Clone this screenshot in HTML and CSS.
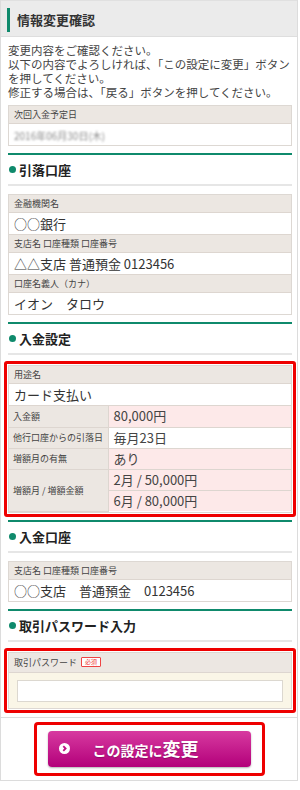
FILE: index.html
```html
<!DOCTYPE html>
<html>
<head>
  <meta charset="UTF-8">
  <link rel="stylesheet" href="styles.css">
</head>
<body>
  <div class="page">
    <div class="page-header">
      <h1 class="page-title">情報変更確認</h1>
    </div>

    <div class="content">
      <p class="lead">変更内容をご確認ください。<br>以下の内容でよろしければ、「この設定に変更」ボタンを押してください。<br>修正する場合は、「戻る」ボタンを押してください。</p>

      <div class="info-box">
        <div class="info-label">次回入金予定日</div>
        <div class="info-value"><span class="masked">2016年06月30日(木)</span></div>
      </div>

      <h2 class="section-title">引落口座</h2>
      <div class="info-box">
        <div class="info-label">金融機関名</div>
        <div class="info-value">○○銀行</div>
        <div class="info-label">支店名 口座種類 口座番号</div>
        <div class="info-value">△△支店 普通預金 0123456</div>
        <div class="info-label">口座名義人（カナ）</div>
        <div class="info-value">イオン　タロウ</div>
      </div>

      <h2 class="section-title">入金設定</h2>
      <div class="highlight">
        <div class="info-box">
          <div class="info-label">用途名</div>
          <div class="info-value">カード支払い</div>
          <table class="info-table">
            <tr><th>入金額</th><td>80,000円</td></tr>
            <tr><th>他行口座からの引落日</th><td class="plain">毎月23日</td></tr>
            <tr><th>増額月の有無</th><td>あり</td></tr>
            <tr><th rowspan="2">増額月 / 増額金額</th><td>2月 / 50,000円</td></tr>
            <tr><td>6月 / 80,000円</td></tr>
          </table>
        </div>
      </div>

      <h2 class="section-title">入金口座</h2>
      <div class="info-box">
        <div class="info-label">支店名 口座種類 口座番号</div>
        <div class="info-value">○○支店　普通預金　0123456</div>
      </div>

      <h2 class="section-title">取引パスワード入力</h2>
      <div class="highlight">
        <div class="info-box">
          <div class="info-label password-label">取引パスワード<span class="badge">必須</span></div>
          <div class="input-area">
            <input type="password" class="text-input">
          </div>
        </div>
      </div>
    </div>

    <div class="action-area">
      <div class="action-frame">
        <button class="button-submit">
          <svg class="button-icon" width="11" height="11" viewBox="0 0 11 11">
            <circle cx="5.5" cy="5.5" r="5.5" fill="#fff"/>
            <path d="M4.3 3.2 L6.6 5.5 L4.3 7.8" fill="none" stroke="#c01085" stroke-width="1.8"/>
          </svg>
          <span class="button-text">この設定に<span class="button-text-large">変更</span></span>
        </button>
      </div>
    </div>
  </div>
</body>
</html>
```

FILE: styles.css
```css
* {
  margin: 0;
  padding: 0;
  box-sizing: border-box;
}

body {
  width: 300px;
  font-family: "Noto Sans CJK JP", "Liberation Sans", sans-serif;
  color: #333;
  background-color: #fff;
}

.page {
  width: 298px;
  border-left: 1px solid #dcdcdc;
  border-right: 1px solid #dcdcdc;
}

.page-header {
  height: 37px;
  padding: 7px 6px 0;
  background-color: #ebebeb;
  border-top: 1px solid #e0e0e0;
  border-bottom: 1px solid #dedede;
}

.page-title {
  height: 24px;
  padding-left: 7px;
  border-left: 3px solid #0f8a6c;
  font-size: 13px;
  font-weight: bold;
  line-height: 23px;
  color: #333;
}

.content {
  padding: 6px 5px 8px 7px;
  border-bottom: 1px solid #dcdcdc;
}

.lead {
  font-size: 11.5px;
  line-height: 14px;
  color: #444;
  margin-bottom: 6px;
}

.info-box {
  border: 1px solid #ddd8d3;
  background: #fff;
}

.info-label {
  height: 18px;
  padding: 0 5px;
  font-size: 9px;
  line-height: 17px;
  color: #444;
  white-space: nowrap;
  background-color: #ece7e2;
  border-bottom: 1px solid #ddd6d0;
}

.info-value {
  height: 22px;
  padding: 0 5px;
  font-size: 13px;
  line-height: 21px;
  color: #333;
  border-bottom: 1px solid #ddd6d0;
}

.info-box > .info-value:last-child {
  height: 21px;
  border-bottom: none;
}

.masked {
  font-size: 10px;
  color: #8a8a8a;
  filter: blur(0.8px);
}

.section-title {
  position: relative;
  height: 33px;
  margin-top: 7px;
  margin-bottom: 8px;
  padding-left: 11px;
  border-top: 2px solid #0f8a6c;
  border-bottom: 2px solid #e6e6e6;
  font-size: 13px;
  font-weight: bold;
  line-height: 29px;
  color: #222;
}

.section-title::before {
  content: "";
  position: absolute;
  left: 1px;
  top: 11px;
  width: 7px;
  height: 7px;
  border-radius: 50%;
  background-color: #0f8a6c;
}

.highlight {
  margin: -2px -4px -4px;
  padding: 1px;
  border: 3px solid #ee0000;
  border-radius: 3px;
}

.info-table {
  width: 100%;
  border-collapse: collapse;
}

.info-table th {
  width: 99px;
  height: 21px;
  padding: 0 4px;
  font-size: 9px;
  font-weight: normal;
  text-align: left;
  white-space: nowrap;
  color: #444;
  background-color: #ece7e2;
  border-bottom: 1px solid #ddd6d0;
  border-right: 1px solid #ddd6d0;
}

.info-table td {
  height: 21px;
  padding: 0 5px;
  font-size: 13px;
  line-height: 20px;
  color: #444;
  background-color: #fde9e9;
  border-bottom: 1px solid #ddd6d0;
}

.info-table td.plain {
  background-color: #fff;
}

.info-table tr:last-child td,
.info-table tr:last-child th {
  border-bottom: none;
}

.password-label {
  display: flex;
  align-items: center;
  height: 20px;
}

.badge {
  display: inline-block;
  width: 20px;
  height: 10px;
  margin-left: 4px;
  border: 1px solid #e44;
  border-radius: 1px;
  background: #fff;
  color: #e33;
  font-size: 6px;
  line-height: 8px;
  text-align: center;
}

.input-area {
  padding: 7px 8px 6px;
  background-color: #faf6e7;
}

.text-input {
  display: block;
  width: 100%;
  height: 22px;
  border: 1px solid #dcd8d0;
  background: #fff;
}

.action-area {
  padding: 4px 0 4px;
  border-bottom: 1px solid #dcdcdc;
  text-align: center;
}

.action-frame {
  display: inline-block;
  padding: 6px 11px;
  border: 3px solid #ee0000;
  border-radius: 4px;
}

.button-submit {
  display: flex;
  align-items: center;
  width: 203px;
  height: 36px;
  padding-left: 11px;
  border: none;
  border-radius: 4px;
  background: linear-gradient(#d73aa0, #b3007a);
  box-shadow: 0 1px 2px rgba(0, 0, 0, 0.3);
  color: #fff;
  font-family: "Noto Sans CJK JP", sans-serif;
  cursor: pointer;
}

.button-icon {
  flex-shrink: 0;
}

.button-text {
  margin-left: 23px;
  font-size: 14px;
  font-weight: bold;
  line-height: 20px;
  text-shadow: 0 1px 1px rgba(0, 0, 0, 0.25);
}

.button-text-large {
  font-size: 18px;
}
```
